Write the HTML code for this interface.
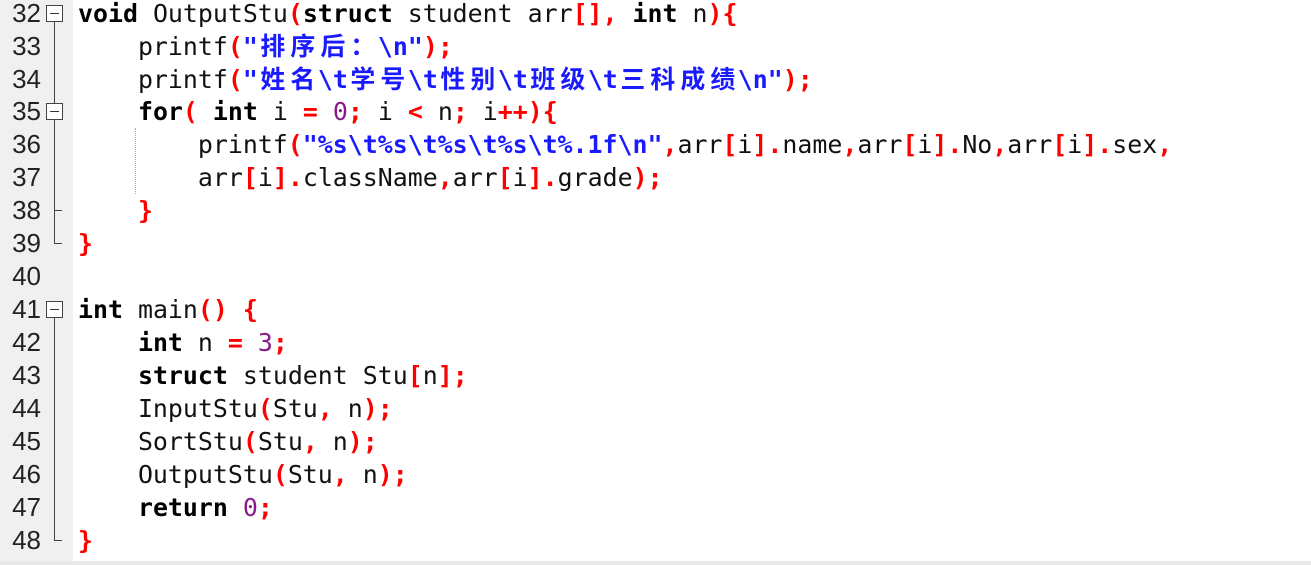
<!DOCTYPE html>
<html><head><meta charset="utf-8"><style>
body{margin:0;width:1311px;height:565px;background:#fff;overflow:hidden;position:relative;font-family:"DejaVu Sans Mono","Noto Sans CJK SC",monospace;font-size:24.9px;}
#g{position:absolute;left:0;top:0;width:73px;height:561px;background:#f0f0f0}
#bot{position:absolute;left:0;top:561px;width:1311px;height:4px;background:#e8e8e8}
.ln{position:absolute;left:0;width:41px;text-align:right;color:#222;font-family:"Liberation Sans",sans-serif;font-size:26px;line-height:33px}
.c{position:absolute;left:78px;white-space:pre;line-height:33px;color:#111}
.k{font-weight:bold;color:#000}
.s{font-weight:bold;color:#1a1aff}
.o{font-weight:bold;color:#f00}
.n{color:#8a1a8a}
.z{display:inline-block;width:30px;text-align:center}
.box{position:absolute;left:46px;width:17px;height:17px;border:1px solid #444;background:#fff;box-sizing:border-box}
.box:after{content:"";position:absolute;left:3px;right:3px;top:7px;height:1px;background:#333}
.vl{position:absolute;left:54px;width:1px;background:#444}
.hl{position:absolute;left:54px;width:8px;height:1px;background:#444}
.dg{position:absolute;left:135px;width:0;border-left:1px dotted #aaa}
</style></head><body>
<div id="g"></div><div id="bot"></div>
<div class="ln" style="top:-3px">32</div>
<div class="ln" style="top:30px">33</div>
<div class="ln" style="top:63px">34</div>
<div class="ln" style="top:95px">35</div>
<div class="ln" style="top:128px">36</div>
<div class="ln" style="top:161px">37</div>
<div class="ln" style="top:194px">38</div>
<div class="ln" style="top:227px">39</div>
<div class="ln" style="top:260px">40</div>
<div class="ln" style="top:293px">41</div>
<div class="ln" style="top:326px">42</div>
<div class="ln" style="top:359px">43</div>
<div class="ln" style="top:392px">44</div>
<div class="ln" style="top:425px">45</div>
<div class="ln" style="top:458px">46</div>
<div class="ln" style="top:491px">47</div>
<div class="ln" style="top:524px">48</div>
<div class="vl" style="top:19px;height:224px"></div>
<div class="hl" style="top:210px"></div><div class="hl" style="top:243px"></div>
<div class="vl" style="top:316px;height:224px"></div>
<div class="hl" style="top:540px"></div>
<div class="box" style="top:5px"></div>
<div class="box" style="top:103px"></div>
<div class="box" style="top:301px"></div>
<div class="dg" style="top:128px;height:66px"></div>
<div class="c" style="top:-3px"><span class="k">void</span> OutputStu<span class="o">(</span><span class="k">struct</span> student arr<span class="o">[],</span> <span class="k">int</span> n<span class="o">){</span></div>
<div class="c" style="top:30px">    printf<span class="o">(</span><span class="s">"<span class="z">排</span><span class="z">序</span><span class="z">后</span><span class="z">：</span>\n"</span><span class="o">);</span></div>
<div class="c" style="top:63px">    printf<span class="o">(</span><span class="s">"<span class="z">姓</span><span class="z">名</span>\t<span class="z">学</span><span class="z">号</span>\t<span class="z">性</span><span class="z">别</span>\t<span class="z">班</span><span class="z">级</span>\t<span class="z">三</span><span class="z">科</span><span class="z">成</span><span class="z">绩</span>\n"</span><span class="o">);</span></div>
<div class="c" style="top:95px">    <span class="k">for</span><span class="o">(</span> <span class="k">int</span> i <span class="o">=</span> <span class="n">0</span><span class="o">;</span> i <span class="o">&lt;</span> n<span class="o">;</span> i<span class="o">++){</span></div>
<div class="c" style="top:128px">        printf<span class="o">(</span><span class="s">"%s\t%s\t%s\t%s\t%.1f\n"</span><span class="o">,</span>arr<span class="o">[</span>i<span class="o">].</span>name<span class="o">,</span>arr<span class="o">[</span>i<span class="o">].</span>No<span class="o">,</span>arr<span class="o">[</span>i<span class="o">].</span>sex<span class="o">,</span></div>
<div class="c" style="top:161px">        arr<span class="o">[</span>i<span class="o">].</span>className<span class="o">,</span>arr<span class="o">[</span>i<span class="o">].</span>grade<span class="o">);</span></div>
<div class="c" style="top:194px">    <span class="o">}</span></div>
<div class="c" style="top:227px"><span class="o">}</span></div>
<div class="c" style="top:293px"><span class="k">int</span> main<span class="o">()</span> <span class="o">{</span></div>
<div class="c" style="top:326px">    <span class="k">int</span> n <span class="o">=</span> <span class="n">3</span><span class="o">;</span></div>
<div class="c" style="top:359px">    <span class="k">struct</span> student Stu<span class="o">[</span>n<span class="o">];</span></div>
<div class="c" style="top:392px">    InputStu<span class="o">(</span>Stu<span class="o">,</span> n<span class="o">);</span></div>
<div class="c" style="top:425px">    SortStu<span class="o">(</span>Stu<span class="o">,</span> n<span class="o">);</span></div>
<div class="c" style="top:458px">    OutputStu<span class="o">(</span>Stu<span class="o">,</span> n<span class="o">);</span></div>
<div class="c" style="top:491px">    <span class="k">return</span> <span class="n">0</span><span class="o">;</span></div>
<div class="c" style="top:524px"><span class="o">}</span></div>
</body></html>
